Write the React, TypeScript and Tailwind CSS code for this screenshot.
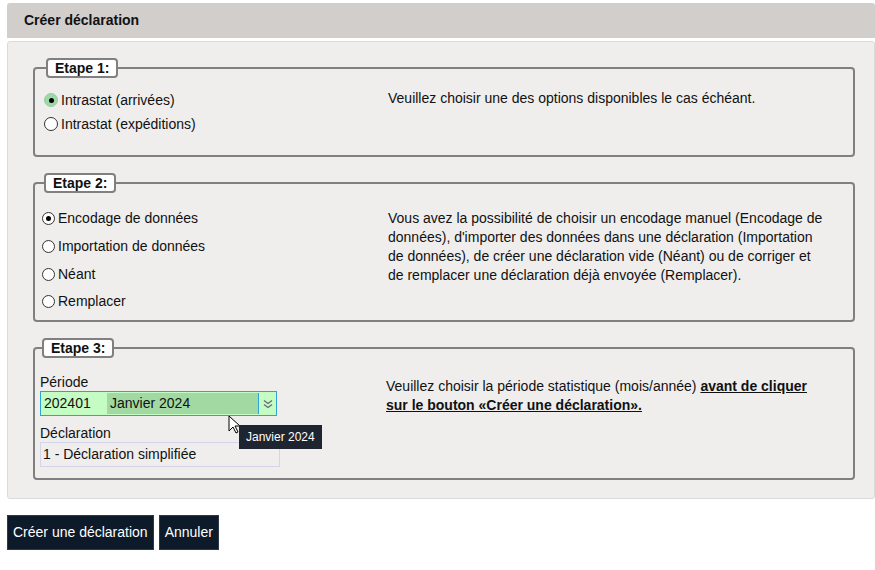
import React from "react";

const Radio = ({ checked, green, big }: { checked?: boolean; green?: boolean; big?: boolean }) => (
  <span
    className={`inline-flex items-center justify-center ${big ? "w-[14px] h-[14px]" : "w-[13px] h-[13px]"} rounded-full border ${
      green ? "border-[#8fd19e] bg-[#9fd8a8]" : "border-[#333] bg-white"
    } mr-[3px] shrink-0`}
  >
    {checked && <span className="w-[5px] h-[5px] rounded-full bg-black" />}
  </span>
);

const Legend = ({ children }: { children: React.ReactNode }) => (
  <legend className="ml-[2px] px-[7px] h-[20px] leading-[16px] border-2 border-[#808080] rounded-[4px] bg-white font-bold text-[14px]">
    {children}
  </legend>
);

export default function App() {
  return (
    <div className="w-[875px] h-[570px] bg-white pt-[3px] text-[14px] text-[#111]" style={{ fontFamily: '"Liberation Sans", Arial, sans-serif' }}>
      <div className="ml-[7px] h-[35px] bg-[#d1cecc] rounded-t-[3px] flex items-center pl-[17px] font-bold text-[14px]">
        Créer déclaration
      </div>
      <div className="ml-[7px] mt-[3px] h-[458px] bg-[#efeeed] border border-[#dddbd9] rounded-[3px] pl-[25px] pr-[19px] pt-[16px]">
        <fieldset className="h-[99px] border-2 border-[#808080] rounded-[4px] pl-[9px] pr-[8px] flex">
          <Legend>Etape 1:</Legend>
          <div className="w-[344px] pt-[10px]">
            <div className="flex items-center h-[24px]"><Radio checked green big />Intrastat (arrivées)</div>
            <div className="flex items-center h-[24px]"><Radio big />Intrastat (expéditions)</div>
          </div>
          <div className="pt-[10px]">Veuillez choisir une des options disponibles le cas échéant.</div>
        </fieldset>
        <fieldset className="mt-[16px] h-[149px] border-2 border-[#808080] rounded-[4px] pl-[7px] pr-[8px] flex">
          <Legend>Etape 2:</Legend>
          <div className="w-[346px] pt-[12px]">
            {["Encodage de données", "Importation de données", "Néant", "Remplacer"].map((t, i) => (
              <div key={t} className="flex items-center h-[27.7px]"><Radio checked={i === 0} />{t}</div>
            ))}
          </div>
          <div className="pt-[16px] leading-[19px] w-[436px]">
            Vous avez la possibilité de choisir un encodage manuel (Encodage de données), d'importer des données dans une déclaration (Importation de données), de créer une déclaration vide (Néant) ou de corriger et de remplacer une déclaration déjà envoyée (Remplacer).
          </div>
        </fieldset>
        <fieldset className="mt-[16px] h-[142px] border-2 border-[#808080] rounded-[4px] pl-[5px] pr-[8px] flex">
          <Legend>Etape 3:</Legend>
          <div className="w-[346px] pt-[15px] relative">
            <div className="leading-[18px]">Période</div>
            <div className="w-[237px] h-[25px] border border-[#2fa3d6] bg-[#c4fcc4] flex items-center">
              <span className="pl-[3px] w-[66px]">202401</span>
              <span className="w-[151px] h-[21px] bg-[#a2d9a2] flex items-center pl-[3px]">Janvier 2024</span>
              <span className="w-px h-[21px] bg-[#2fa3d6]" />
              <span className="flex-1 flex justify-center">
                <svg width="10" height="10" viewBox="0 0 10 10" fill="none" stroke="#667" strokeWidth="1.2"><path d="M1 1.5l4 3 4-3M1 5.5l4 3 4-3" /></svg>
              </span>
            </div>
            <div className="mt-[8px] leading-[18px]">Déclaration</div>
            <div className="w-[240px] h-[25px] border border-[#d4d4ec] flex items-center pl-[2px]">1 - Déclaration simplifiée</div>
            <svg className="absolute left-[188px] top-[57px]" width="14" height="20" viewBox="0 0 14 20"><path d="M1 1v15l4-4 3 6 2-1-3-6h5z" fill="white" stroke="black" strokeWidth="1" /></svg>
            <div className="absolute left-[199px] top-[67px] bg-[#1e2530] text-white text-[12px] px-[7px] h-[24px] flex items-center">Janvier 2024</div>
          </div>
          <div className="pt-[19px] leading-[19px]">
            Veuillez choisir la période statistique (mois/année) <b className="underline">avant de cliquer<br />sur le bouton «Créer une déclaration».</b>
          </div>
        </fieldset>
      </div>
      <div className="ml-[7px] mt-[16px] flex gap-[5px]">
        <button className="h-[35px] px-[5px] bg-[#0d1a2a] text-white border border-[#2a3a4a]">Créer une déclaration</button>
        <button className="h-[35px] px-[5px] bg-[#0d1a2a] text-white border border-[#2a3a4a]">Annuler</button>
      </div>
    </div>
  );
}
